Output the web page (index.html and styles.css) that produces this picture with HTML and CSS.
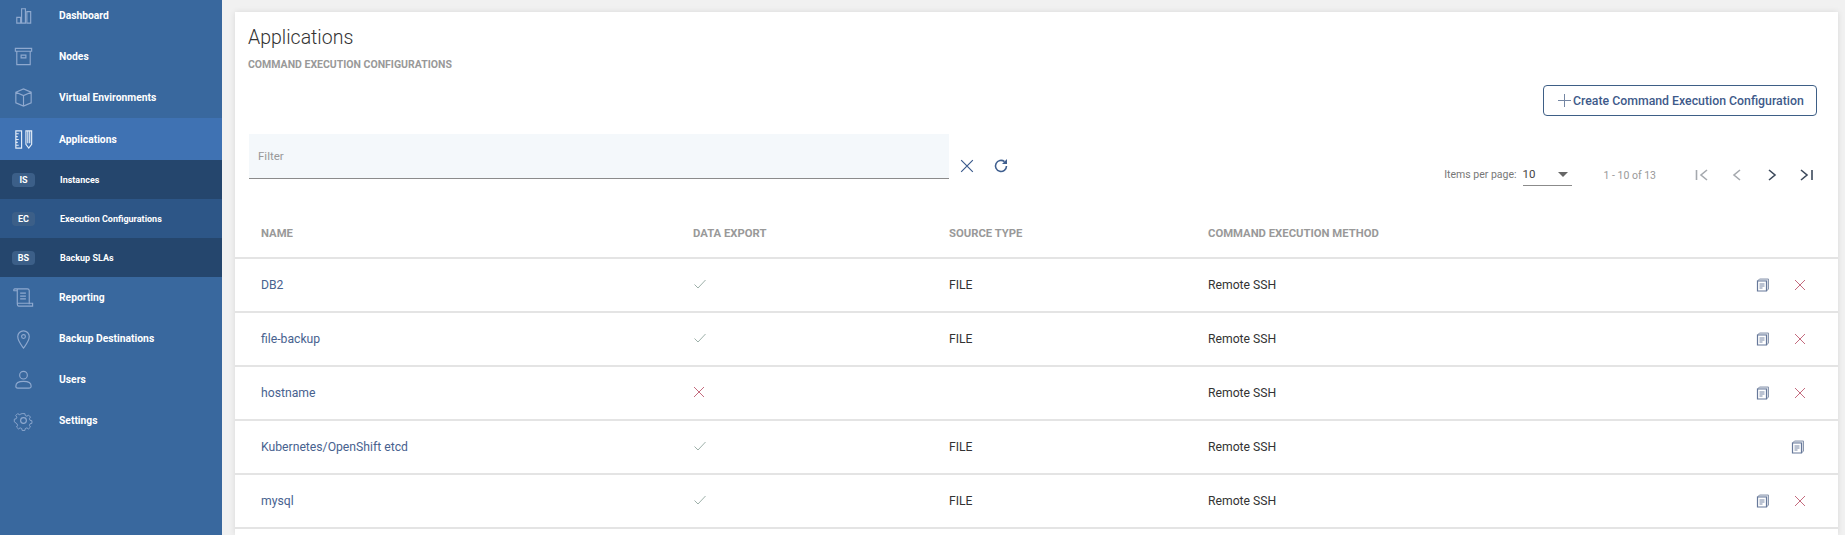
FILE: index.html
```html
<!DOCTYPE html>
<html lang="en">
<head>
    <meta charset="UTF-8">
    <title>Applications</title>
    <link rel="stylesheet" href="styles.css">
</head>
<body>
    <svg class="defs" width="0" height="0">
        <symbol id="i-doc" viewBox="0 0 14 14">
            <path d="M1.5 3l2-2h9v10l-2 2" fill="#dfe3ea" stroke="#8a97ae" stroke-width="1"/>
            <path d="M1.5 3h9v10h-9z" fill="#fff" stroke="#66789a" stroke-width="1.2"/>
            <path d="M3.5 6h5M3.5 8h5M3.5 10h3" stroke="#66789a" stroke-width=".9"/>
        </symbol>
        <symbol id="i-x" viewBox="0 0 12 12">
            <path d="M1 1l10 10M11 1L1 11" stroke="currentColor" fill="none"/>
        </symbol>
        <symbol id="i-check" viewBox="0 0 14 12">
            <path d="M1.5 6.5l3.500 3.500 7.500-8" stroke="#9db0a9" stroke-width="1" fill="none"/>
        </symbol>
    </svg>

    <div class="layout">
        <nav class="sidebar">
            <a class="nav-item">
                <svg class="nav-icon" viewBox="0 0 24 24"><path d="M5 14h4v6H5zM10 5h4v15h-4zM15.500 8h4v12h-4z"/></svg>
                <span>Dashboard</span>
            </a>
            <a class="nav-item">
                <svg class="nav-icon" viewBox="0 0 24 24"><path d="M3.500 3.500h17v3h-17zM5 6.500h14v14H5zM9.500 10.500h5v3h-5z"/></svg>
                <span>Nodes</span>
            </a>
            <a class="nav-item">
                <svg class="nav-icon" viewBox="0 0 24 24"><path d="M4 6.500L12 3l8 3.500v11L12 21l-8-3.500zM4 6.500L12 10l8-3.500M12 10v11"/></svg>
                <span>Virtual Environments</span>
            </a>
            <a class="nav-item active">
                <svg class="nav-icon" viewBox="0 0 24 24"><path class="bright" d="M4 3h6v18H4zM4 6h3M4 9h2M4 12h3M4 15h2M4 18h3M14.500 3h6v14l-3 4-3-4zM16.500 3v13M18.500 3v13"/></svg>
                <span>Applications</span>
            </a>
            <a class="sub-item dark"><span class="badge">IS</span><span>Instances</span></a>
            <a class="sub-item"><span class="badge">EC</span><span>Execution Configurations</span></a>
            <a class="sub-item dark"><span class="badge">BS</span><span>Backup SLAs</span></a>
            <a class="nav-item">
                <svg class="nav-icon" viewBox="0 0 24 24"><path d="M3 3h13c1.500 0 2 1 2 2v14M3 3c-1 0-1.500 1-1 2h3.500M5.500 3v15M8.500 7.500h6M8.500 10.500h6M8.500 13.500h6M5.500 18h16v3H7c-1.500 0-1.500-3-1.500-3"/></svg>
                <span>Reporting</span>
            </a>
            <a class="nav-item">
                <svg class="nav-icon" viewBox="0 0 24 24"><path d="M12 22c-3-4-6-7.500-6-12a6 6 0 0 1 12 0c0 4.500-3 8-6 12z"/><circle cx="12" cy="10" r="2"/></svg>
                <span>Backup Destinations</span>
            </a>
            <a class="nav-item">
                <svg class="nav-icon" viewBox="0 0 24 24"><circle cx="12" cy="7.500" r="4"/><path d="M6 21c-1.500 0-2-1-2-2 0-3.500 4-5 8-5s8 1.500 8 5c0 1-.5 2-2 2z"/></svg>
                <span>Users</span>
            </a>
            <a class="nav-item">
                <svg class="nav-icon" viewBox="0 0 24 24"><circle cx="12" cy="12" r="3"/><path d="M10.200 3h3.600l.5 2.500 2.100.9 2.200-1.400 2.500 2.500-1.400 2.200.9 2.100 2.400.5v3.400l-2.400.5-.9 2.100 1.400 2.200-2.500 2.500-2.200-1.400-2.100.9-.5 2.500h-3.600l-.5-2.500-2.100-.9-2.200 1.400-2.500-2.500 1.400-2.200-.9-2.100L0 13.700v-3.400l2.400-.5.900-2.100-1.400-2.200L4.400 3l2.200 1.400 2.100-.9z" transform="translate(2.400 2.400) scale(.8)"/></svg>
                <span>Settings</span>
            </a>
        </nav>

        <main class="content">
            <div class="card">
                <h1>Applications</h1>
                <h2>COMMAND EXECUTION CONFIGURATIONS</h2>

                <div class="actions">
                    <button class="create-btn">
                        <svg class="plus" width="13" height="13" viewBox="0 0 13 13"><path d="M6.500 0v13M0 6.500h13" stroke="#7486a3" fill="none"/></svg>
                        Create Command Execution Configuration
                    </button>
                </div>

                <div class="toolbar">
                    <div class="filter">Filter</div>
                    <svg class="clear-icon" width="14" height="14"><use href="#i-x"/></svg>
                    <svg class="refresh-icon" width="18" height="18" viewBox="0 0 18 18">
                        <path d="M14.500 9A5.500 5.500 0 1 1 12.500 4.700" fill="none" stroke="#3f5f8f" stroke-width="1.600"/>
                        <path d="M15 2v5h-5z" fill="#3f5f8f"/>
                    </svg>
                    <div class="paginator">
                        <span class="per-page">Items per page:</span>
                        <div class="page-select"><span>10</span><i class="caret"></i></div>
                        <span class="range">1 - 10 of 13</span>
                        <div class="page-btns">
                            <svg viewBox="0 0 16 16"><path class="off" d="M2.500 3v10M13 3L7 8l6 5"/></svg>
                            <svg viewBox="0 0 16 16"><path class="off" d="M11 3L5 8l6 5"/></svg>
                            <svg viewBox="0 0 16 16"><path d="M5 3l6 5-6 5"/></svg>
                            <svg viewBox="0 0 16 16"><path d="M2 3l6 5-6 5M13 3v10"/></svg>
                        </div>
                    </div>
                </div>

                <table class="apps">
                    <thead>
                        <tr>
                            <th class="col-name">NAME</th>
                            <th class="col-export">DATA EXPORT</th>
                            <th class="col-type">SOURCE TYPE</th>
                            <th>COMMAND EXECUTION METHOD</th>
                            <th class="col-actions"></th>
                        </tr>
                    </thead>
                    <tbody>
                        <tr>
                            <td><a>DB2</a></td>
                            <td><svg class="check" width="14" height="12"><use href="#i-check"/></svg></td>
                            <td>FILE</td>
                            <td>Remote SSH</td>
                            <td class="row-actions"><svg class="doc" width="14" height="14"><use href="#i-doc"/></svg><svg class="del" width="12" height="12"><use href="#i-x"/></svg></td>
                        </tr>
                        <tr>
                            <td><a>file-backup</a></td>
                            <td><svg class="check" width="14" height="12"><use href="#i-check"/></svg></td>
                            <td>FILE</td>
                            <td>Remote SSH</td>
                            <td class="row-actions"><svg class="doc" width="14" height="14"><use href="#i-doc"/></svg><svg class="del" width="12" height="12"><use href="#i-x"/></svg></td>
                        </tr>
                        <tr>
                            <td><a>hostname</a></td>
                            <td><svg class="del no-export" width="12" height="12"><use href="#i-x"/></svg></td>
                            <td></td>
                            <td>Remote SSH</td>
                            <td class="row-actions"><svg class="doc" width="14" height="14"><use href="#i-doc"/></svg><svg class="del" width="12" height="12"><use href="#i-x"/></svg></td>
                        </tr>
                        <tr>
                            <td><a>Kubernetes/OpenShift etcd</a></td>
                            <td><svg class="check" width="14" height="12"><use href="#i-check"/></svg></td>
                            <td>FILE</td>
                            <td>Remote SSH</td>
                            <td class="row-actions"><svg class="doc only" width="14" height="14"><use href="#i-doc"/></svg></td>
                        </tr>
                        <tr>
                            <td><a>mysql</a></td>
                            <td><svg class="check" width="14" height="12"><use href="#i-check"/></svg></td>
                            <td>FILE</td>
                            <td>Remote SSH</td>
                            <td class="row-actions"><svg class="doc" width="14" height="14"><use href="#i-doc"/></svg><svg class="del" width="12" height="12"><use href="#i-x"/></svg></td>
                        </tr>
                    </tbody>
                </table>
            </div>
        </main>
    </div>
</body>
</html>
```

FILE: styles.css
```css
html, body {
    margin: 0;
    height: 100%;
    overflow: hidden;
}

body {
    font-family: Roboto, "Liberation Sans", sans-serif;
    background-color: #f1f1f1;
    color: #333;
}

.defs {
    display: block;
    height: 0;
}

.layout {
    display: flex;
    height: 535px;
}

/* sidebar */
.sidebar {
    width: 222px;
    flex: none;
    background-color: #39689e;
    color: #fff;
    overflow: hidden;
}

.nav-item {
    display: flex;
    align-items: center;
    height: 41px;
    font-size: 10.300px;
    font-weight: 700;
}

.nav-item:first-child {
    margin-top: -5px;
}

.nav-item span {
    margin-left: 24px;
}

.nav-item.active {
    height: 42px;
    background-color: #3f72b3;
}

.nav-icon {
    width: 23px;
    height: 23px;
    margin-left: 12px;
    fill: none;
    stroke: #8fa9cf;
    stroke-width: 1.2;
}

.nav-icon .bright {
    stroke: #e3ecf7;
}

.sub-item {
    display: flex;
    align-items: center;
    height: 39px;
    font-size: 9px;
    font-weight: 700;
    background-color: #2d5687;
}

.sub-item.dark {
    background-color: #25466d;
}

.badge {
    width: 23px;
    height: 14px;
    line-height: 14px;
    margin: 0 25px 0 12px;
    border-radius: 4px;
    text-align: center;
    background-color: #3c5f88;
}

/* main card */
.content {
    flex: 1;
    padding: 12px 7px 0 13px;
    min-width: 0;
}

.card {
    height: 100%;
    background-color: #fff;
    box-shadow: 0 0 6px rgba(0, 0, 0, .1);
    box-sizing: border-box;
    padding-top: 14px;
}

h1 {
    margin: 0 0 0 13px;
    font-size: 19.500px;
    line-height: 24px;
    font-weight: 300;
    color: #333;
}

h2 {
    margin: 8px 0 0 13px;
    font-size: 10.500px;
    line-height: 13px;
    font-weight: 700;
    color: #999;
}

.actions {
    display: flex;
    justify-content: flex-end;
    margin: 14px 21px 0 0;
}

.create-btn {
    display: flex;
    align-items: center;
    gap: 2px;
    height: 31px;
    width: 274px;
    padding: 0 14px;
    background-color: #fff;
    border: 1px solid #3e5f86;
    border-radius: 4px;
    font-family: inherit;
    font-size: 12.300px;
    font-weight: 500;
    white-space: nowrap;
    color: #3e5a8a;
}

.plus {
    flex: none;
}

.toolbar {
    display: flex;
    align-items: flex-start;
    margin: 18px 0 0 14px;
}

.filter {
    width: 700px;
    height: 45px;
    line-height: 45px;
    box-sizing: border-box;
    padding-left: 9px;
    background-color: #f4f8fb;
    border-bottom: 1px solid #8b8b8b;
    font-size: 11.500px;
    color: #999;
}

.clear-icon {
    margin: 25px 0 0 11px;
    color: #3a5a8c;
}

.refresh-icon {
    margin: 23px 0 0 18px;
}

.paginator {
    display: flex;
    align-items: flex-start;
    margin: 34px 0 0 auto;
    padding-right: 23px;
    font-size: 10.500px;
    color: #777;
}

.per-page {
    line-height: 14px;
    margin-right: 1px;
}

.page-select {
    display: flex;
    justify-content: space-between;
    width: 49px;
    height: 18px;
    margin-left: 5px;
    margin-top: -1px;
    border-bottom: 1px solid #8b8b8b;
    font-size: 11.500px;
    line-height: 15px;
    color: #444;
}

.caret {
    margin: 5px 4px 0 0;
    border-left: 5px solid transparent;
    border-right: 5px solid transparent;
    border-top: 5px solid #666;
    height: 0;
}

.range {
    margin-left: 32px;
    line-height: 15px;
    color: #999;
}

.page-btns {
    display: flex;
    gap: 19px;
    margin-left: 38px;
    margin-top: -1px;
}

.page-btns svg {
    width: 16px;
    height: 16px;
    fill: none;
    stroke: #3d4a5c;
    stroke-width: 1.6;
}

.page-btns .off {
    stroke: #a5a9ae;
}

/* table */
.apps {
    width: 100%;
    margin-top: 24px;
    border-collapse: collapse;
    table-layout: fixed;
    font-size: 12.200px;
}

.apps th {
    height: 48px;
    padding: 0;
    text-align: left;
    font-size: 11.300px;
    font-weight: 700;
    color: #999;
    border-bottom: 2px solid #e4e4e4;
    box-sizing: border-box;
}

.apps td {
    height: 54px;
    padding: 0;
    border-bottom: 2px solid #e4e4e4;
    box-sizing: border-box;
    color: #333;
}

.apps th:first-child, .apps td:first-child {
    padding-left: 26px;
}

.apps td a {
    color: #48628f;
}

.col-name {
    width: 458px;
}

.col-export {
    width: 256px;
}

.col-type {
    width: 259px;
}

.col-actions {
    width: 170px;
}

.row-actions {
    text-align: right;
    padding-right: 32px !important;
}

.row-actions svg {
    vertical-align: middle;
}

.check {
    color: #8fa39c;
}

.del {
    color: #c46b7e;
    margin-left: 24px;
}

.no-export {
    margin-left: 0;
}

.doc.only {
    margin-right: 1px;
}
```
